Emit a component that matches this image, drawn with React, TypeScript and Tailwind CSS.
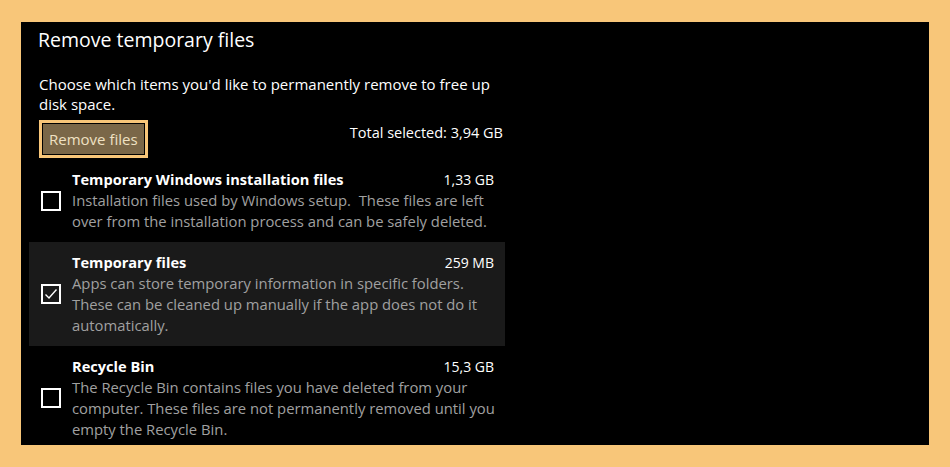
import { useState } from 'react'

type Item = {
  id: string
  title: string
  size: string
  desc: string
}

const items: Item[] = [
  {
    id: 'setup',
    title: 'Temporary Windows installation files',
    size: '1,33 GB',
    desc: 'Installation files used by Windows setup.\u00a0 These files are left over from the installation process and can be safely deleted.',
  },
  {
    id: 'temp',
    title: 'Temporary files',
    size: '259 MB',
    desc: 'Apps can store temporary information in specific folders. These can be cleaned up manually if the app does not do it automatically.',
  },
  {
    id: 'bin',
    title: 'Recycle Bin',
    size: '15,3 GB',
    desc: 'The Recycle Bin contains files you have deleted from your computer. These files are not permanently removed until you empty the Recycle Bin.',
  },
]

function Checkbox({ checked }: { checked: boolean }) {
  return (
    <div className="w-[20px] h-[20px] shrink-0 border-2 border-white flex items-center justify-center">
      {checked && (
        <svg width="14" height="12" viewBox="0 0 14 12" fill="none">
          <path d="M1.5 6.5 L5 10 L12.5 1.5" stroke="white" strokeWidth="1.4" />
        </svg>
      )}
    </div>
  )
}

export default function App() {
  const [selected, setSelected] = useState<Record<string, boolean>>({ temp: true })

  return (
    <div
      className="w-[950px] h-[467px] bg-[#f8c679] pt-[22px] pl-[21px]"
      style={{ fontFamily: '"Open Sans", "Noto Sans", sans-serif' }}
    >
      <div className="w-[908px] h-[423px] bg-black overflow-hidden pl-[8px]">
        <div className="w-[476px] text-white">
          <h1 className="pl-[9px] pt-[4px] text-[19.5px] leading-[28px] font-normal">Remove temporary files</h1>

          <p className="pl-[10px] pr-[14px] mt-[20px] text-[15px] leading-[20px]">
            Choose which items you'd like to permanently remove to free up disk space.
          </p>

          <div className="flex items-center justify-between pl-[10px] pr-[2px] mt-[6px]">
            <button className="h-[38px] px-[7px] border-[3px] border-[#f8c679] bg-[#7a6748] text-[#efe1c3] text-[15px] outline outline-1 outline-black -outline-offset-[4px]">
              Remove files
            </button>
            <span className="text-[14.5px] mb-[12px]">Total selected: 3,94 GB</span>
          </div>

          <div className="mt-[1px]">
            {items.map((it) => {
              const on = !!selected[it.id]
              return (
                <div
                  key={it.id}
                  onClick={() => setSelected({ ...selected, [it.id]: !on })}
                  className={`flex items-center gap-[11px] pl-[12px] pr-[11px] py-[10px] cursor-pointer ${on ? 'bg-[#1a1a1a]' : ''}`}
                >
                  <Checkbox checked={on} />
                  <div className="flex-1 leading-[21px]">
                    <div className="flex justify-between items-baseline">
                      <span className="font-bold text-[14.6px]">{it.title}</span>
                      <span className="text-[14px]">{it.size}</span>
                    </div>
                    <p className="text-[14.8px] text-[#a0a0a0] mr-[-8px]">{it.desc}</p>
                  </div>
                </div>
              )
            })}
          </div>
        </div>
      </div>
    </div>
  )
}
